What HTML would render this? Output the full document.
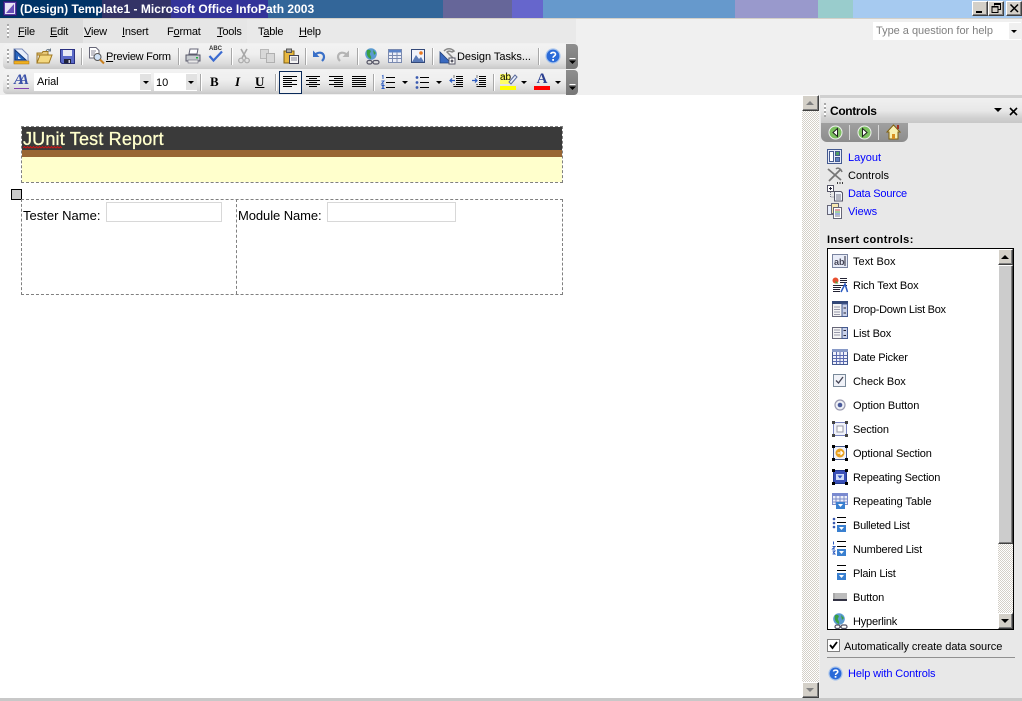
<!DOCTYPE html>
<html>
<head>
<meta charset="utf-8">
<style>
html,body{margin:0;padding:0;background:#fff}
body{width:1022px;height:701px;position:relative;overflow:hidden;font-family:"Liberation Sans",sans-serif;font-size:11px;color:#000}
.a{position:absolute}
.t{position:absolute;white-space:nowrap;line-height:14px;font-size:11px;margin-top:1px}
.m{letter-spacing:-.2px}
.t u{text-decoration:underline}
svg{position:absolute;overflow:visible}
.grip{position:absolute;width:2px;height:14px;background:repeating-linear-gradient(#a8a8a8 0 2px,#fff 2px 4px)}
.tb{position:absolute;background:linear-gradient(#f2f2f2 0,#efefef 40%,#dcdcdc 78%,#c8c8c8 100%);border-radius:4px 0 0 4px}
.sep{position:absolute;width:1px;height:17px;background:#a8a8a8;border-right:1px solid #fff}
.ov{position:absolute;left:566px;width:12px;background:linear-gradient(#8e8e8e,#777);border-radius:0 4px 4px 0}
.btn{position:absolute;box-sizing:border-box;background:#d4d0c8;border:1px solid;border-color:#fff #404040 #404040 #fff;box-shadow:inset -1px -1px 0 #808080}
.link{color:#0000ff}
.it{position:absolute;left:853px;white-space:nowrap;line-height:14px;font-size:11px;letter-spacing:-.12px;margin-top:1px}
.arr{position:absolute;width:0;height:0;border-left:3px solid transparent;border-right:3px solid transparent;border-top:3px solid #000}
</style>
</head>
<body>
<!-- title bar -->
<div class="a" style="left:0;top:0;width:102px;height:18px;background:#003366"></div>
<div class="a" style="left:102px;top:0;width:69px;height:18px;background:#333366"></div>
<div class="a" style="left:171px;top:0;width:97px;height:18px;background:#333399"></div>
<div class="a" style="left:268px;top:0;width:175px;height:18px;background:#336699"></div>
<div class="a" style="left:443px;top:0;width:69px;height:18px;background:#666699"></div>
<div class="a" style="left:512px;top:0;width:31px;height:18px;background:#6666cc"></div>
<div class="a" style="left:543px;top:0;width:192px;height:18px;background:#6699cc"></div>
<div class="a" style="left:735px;top:0;width:83px;height:18px;background:#9999cc"></div>
<div class="a" style="left:818px;top:0;width:35px;height:18px;background:#99cccc"></div>
<div class="a" style="left:853px;top:0;width:169px;height:18px;background:#a6caf0"></div>
<div class="a" style="left:0;top:18px;width:1022px;height:1px;background:#d4d0c8"></div>
<svg style="left:3px;top:1px" width="14" height="15"><rect x=".5" y=".5" width="13" height="14" fill="#5a3fa8" stroke="#2b1d70"/><rect x="2" y="2" width="10" height="11" fill="#e8e4f4"/><path d="M3 12 L11 3 V12Z" fill="#6a50b8"/></svg>
<div class="t" style="left:20px;top:1px;color:#fff;font-weight:bold;font-size:12px;letter-spacing:.02px">(Design) Template1 - Microsoft Office InfoPath 2003</div>
<div class="btn" style="left:972px;top:1px;width:16px;height:15px"><div class="a" style="left:3px;top:9px;width:6px;height:2px;background:#000"></div></div>
<div class="btn" style="left:988px;top:1px;width:16px;height:15px"><svg style="left:2px;top:1px" width="11" height="11"><path d="M3.5 2.5V.5H9.500V6.500H7.500M1 3.500H7V9.500H1Z M3 1.500H9.500 M1 4H7" fill="none" stroke="#000"/></svg></div>
<div class="btn" style="left:1006px;top:1px;width:16px;height:15px"><svg style="left:3px;top:2px" width="9" height="9"><path d="M.5 .5L8 8M8 .5L.5 8" stroke="#000" stroke-width="1.500"/></svg></div>

<!-- toolbar area -->
<div class="a" style="left:0;top:19px;width:1022px;height:76px;background:#f0f0f0"></div>
<div class="a" style="left:0;top:19px;width:83px;height:24px;background:#dcdcdc"></div>
<div class="a" style="left:83px;top:19px;width:164px;height:24px;background:#e6e6e6"></div>
<div class="a" style="left:247px;top:19px;width:329px;height:24px;background:#e9e9e9"></div>
<div class="grip" style="left:7px;top:24px"></div>
<div class="t m" style="left:18px;top:24px"><u>F</u>ile</div>
<div class="t m" style="left:50px;top:24px"><u>E</u>dit</div>
<div class="t m" style="left:84px;top:24px"><u>V</u>iew</div>
<div class="t m" style="left:122px;top:24px"><u>I</u>nsert</div>
<div class="t m" style="left:167px;top:24px">F<u>o</u>rmat</div>
<div class="t m" style="left:217px;top:24px"><u>T</u>ools</div>
<div class="t m" style="left:258px;top:24px">T<u>a</u>ble</div>
<div class="t m" style="left:299px;top:24px"><u>H</u>elp</div>
<div class="a" style="left:873px;top:22px;width:148px;height:18px;background:#fff"></div>
<div class="t" style="left:876px;top:23px;color:#808080;letter-spacing:-.02px">Type a question for help</div>
<div class="a" style="left:1009px;top:23px;width:12px;height:16px;background:#f0f0f0"></div>
<div class="arr" style="left:1011px;top:30px;border-left-width:3px"></div>

<!-- toolbar 1 -->
<div class="tb" style="left:3px;top:44px;width:564px;height:25px"></div>
<div class="ov" style="top:44px;height:25px"></div>
<div class="grip" style="left:7px;top:49px"></div>
<!-- design icon -->
<svg style="left:13px;top:48px" width="17" height="18"><path d="M1 1H9L15 7V15H1Z" fill="#e8eefa" stroke="#7a8ab8"/><path d="M2 2L13 12H2Z" fill="#2a66c0" stroke="#10367a"/><path d="M5 8L8 11H5Z" fill="#e8eefa"/><rect x="1" y="13" width="15" height="3" fill="#f0b020" stroke="#a87010" stroke-width=".5"/></svg>
<!-- open -->
<svg style="left:36px;top:48px" width="17" height="17"><path d="M1 5H6L7 3.500H12V7H1Z" fill="#e8c878" stroke="#a07820"/><path d="M1 15L4 7H16L13 15Z" fill="#f4d880" stroke="#a07820"/><path d="M1 5V15" stroke="#a07820"/><path d="M10 3C11 1 13 1 14.500 2.500M14.500 .5V3H12" fill="none" stroke="#6a7a8a"/></svg>
<!-- save -->
<svg style="left:60px;top:49px" width="15" height="15"><path d="M.5 .5H14.500V14.500H2L.5 13Z" fill="#5a6ac8" stroke="#2a3080"/><rect x="3" y="1" width="9" height="6" fill="#e6e9f4"/><rect x="4" y="10" width="7" height="4.500" fill="#20243c"/><rect x="8.500" y="11" width="1.500" height="3" fill="#ccd"/></svg>
<div class="sep" style="left:81px;top:48px"></div>
<svg style="left:88px;top:47px" width="17" height="18"><path d="M1.500 .5H8L11 3.500V11H1.500Z" fill="#fff" stroke="#667"/><path d="M3 4H8M3 6H7M3 8H6" stroke="#889"/><circle cx="9.500" cy="10" r="3.500" fill="#cfe0f4" stroke="#555"/><path d="M12 12.500L16 16.500" stroke="#c88020" stroke-width="2"/></svg>
<div class="t" style="left:106px;top:49px;letter-spacing:-.25px"><u>P</u>review Form</div>
<div class="sep" style="left:178px;top:48px"></div>
<svg style="left:185px;top:48px" width="16" height="16"><path d="M5 1H13L12 6H4Z" fill="#fff" stroke="#667"/><path d="M1 7H15V13H1Z" fill="#c8ccd0" stroke="#556"/><rect x="3" y="12" width="10" height="3" fill="#e8e8e8" stroke="#667" stroke-width=".6"/><rect x="11" y="9" width="2" height="1.500" fill="#20b040"/></svg>
<div class="a" style="left:209px;top:45px;font-size:6px;font-weight:bold;line-height:8px;color:#333;white-space:nowrap">ABC</div>
<svg style="left:208px;top:50px" width="16" height="13"><path d="M1.500 6L5.500 10.500L14 1.500" fill="none" stroke="#3a6ad0" stroke-width="2.200"/></svg>
<div class="sep" style="left:231px;top:48px"></div>
<svg style="left:238px;top:48px" width="12" height="16"><path d="M3 1L8 10M9 1L4 10" stroke="#a8a8a8" stroke-width="1.600"/><circle cx="3" cy="12.500" r="2.300" fill="none" stroke="#a8a8a8" stroke-width="1.200"/><circle cx="9" cy="12.500" r="2.300" fill="none" stroke="#a8a8a8" stroke-width="1.200"/></svg>
<svg style="left:260px;top:49px" width="16" height="14"><rect x=".5" y=".5" width="8" height="9" fill="#d8d8d8" stroke="#b8b8b8"/><rect x="6.500" y="4.500" width="8" height="9" fill="#d8d8d8" stroke="#b0b0b0"/></svg>
<svg style="left:283px;top:48px" width="16" height="16"><rect x="1" y="3" width="10" height="12" fill="#e8b840" stroke="#806010"/><rect x="3.500" y="1" width="5" height="3.500" fill="#a8a8a8" stroke="#555"/><rect x="6.500" y="7.500" width="9" height="8" fill="#f4f4f4" stroke="#445"/><path d="M8 10H14M8 12H14" stroke="#889"/></svg>
<div class="sep" style="left:305px;top:48px"></div>
<svg style="left:312px;top:49px" width="15" height="14"><path d="M2 7C6 2 12 3 12 8C12 10 11 11 10 12" fill="none" stroke="#3a70c8" stroke-width="2.200"/><path d="M1 1.500V8H7.500Z" fill="#3a70c8"/></svg>
<svg style="left:335px;top:49px" width="15" height="14"><path d="M13 7C9 2 3 3 3 8C3 10 4 11 5 12" fill="none" stroke="#b4b4b4" stroke-width="2.200"/><path d="M14 1.500V8H7.500Z" fill="#b4b4b4"/></svg>
<div class="sep" style="left:357px;top:48px"></div>
<svg style="left:364px;top:48px" width="17" height="17"><circle cx="7" cy="6" r="5.800" fill="#5a9ad0"/><path d="M3 2C6 1 8 3 6 5C5 7 8 8 7 11C4 10 2 7 3 2ZM9 2L12 5L10 7Z" fill="#3aa040"/><rect x="3" y="12.500" width="5" height="3.500" rx="1.700" fill="none" stroke="#556" stroke-width="1.200"/><rect x="9" y="12.500" width="6" height="3.500" rx="1.700" fill="none" stroke="#556" stroke-width="1.200"/></svg>
<svg style="left:388px;top:49px" width="14" height="14"><rect x=".5" y=".5" width="13" height="13" fill="#eef0f8" stroke="#7a8ab0"/><rect x="1" y="1" width="12" height="2.500" fill="#5a82c8"/><path d="M1 6.500H13M1 9.500H13M4.500 3V13M9 3V13" stroke="#7a8ab0"/></svg>
<svg style="left:411px;top:49px" width="14" height="14"><rect x=".5" y=".5" width="13" height="13" fill="#f0f2fa" stroke="#334878"/><path d="M1 13L5 6L8 10L10 8L13 13Z" fill="#5a7ab8"/><circle cx="10" cy="4" r="1.800" fill="#e87820"/></svg>
<div class="sep" style="left:432px;top:48px"></div>
<svg style="left:439px;top:47px" width="17" height="18"><path d="M1 16V5L12 16Z" fill="#3a6ac0" stroke="#20407a" stroke-width=".8"/><path d="M5 4C8 1 12 1 15 4L13 5C11 4 9 4 8 5L14 11" fill="none" stroke="#888" stroke-width="1.500"/><rect x="10" y="11" width="6" height="6" fill="#fff" stroke="#556"/><path d="M13 12.500V15.500M11.500 14H14.500" stroke="#223"/></svg>
<div class="t" style="left:457px;top:49px;letter-spacing:-.03px">Desi<u>g</u>n Tasks...</div>
<div class="sep" style="left:538px;top:48px"></div>
<svg style="left:545px;top:48px" width="16" height="16"><circle cx="8" cy="8" r="7" fill="#2a6ad8" stroke="#a8c4ec" stroke-width="1.200"/><path d="M5.800 6C6 4 10.500 3.800 10.500 6.200C10.500 8 8 8 8 9.800" fill="none" stroke="#fff" stroke-width="1.600"/><rect x="7.200" y="11" width="1.800" height="1.800" fill="#fff"/></svg>
<svg style="left:569px;top:58px" width="7" height="8"><path d="M.5 .5H6.500" stroke="#fff"/><path d="M0 2.500H7L3.500 6Z" fill="#000"/></svg>

<!-- toolbar 2 -->
<div class="tb" style="left:3px;top:70px;width:564px;height:24px"></div>
<div class="ov" style="top:70px;height:25px"></div>
<div class="grip" style="left:7px;top:75px"></div>
<div class="a" style="left:14px;top:72px;font-family:'Liberation Serif',serif;font-style:italic;font-weight:bold;font-size:15px;line-height:17px;color:#3a50a8;letter-spacing:-5px">AA</div>
<div class="a" style="left:14px;top:88px;width:15px;height:1px;background:#8040b0"></div>
<div class="a" style="left:34px;top:73px;width:117px;height:18px;background:#fff"></div>
<div class="t" style="left:37px;top:74px;letter-spacing:-.1px">Arial</div>
<div class="a" style="left:140px;top:74px;width:11px;height:16px;background:#e2e2e2"></div>
<div class="arr" style="left:143px;top:81px"></div>
<div class="a" style="left:154px;top:73px;width:43px;height:18px;background:#fff"></div>
<div class="t" style="left:156px;top:75px">10</div>
<div class="a" style="left:186px;top:74px;width:11px;height:16px;background:#e2e2e2"></div>
<div class="arr" style="left:188px;top:81px"></div>
<div class="sep" style="left:200px;top:74px"></div>
<div class="a" style="left:210px;top:74px;font-family:'Liberation Serif',serif;font-weight:bold;font-size:13px;line-height:15px">B</div>
<div class="a" style="left:235px;top:74px;font-family:'Liberation Serif',serif;font-weight:bold;font-style:italic;font-size:13px;line-height:15px">I</div>
<div class="a" style="left:255px;top:74px;font-family:'Liberation Serif',serif;font-weight:bold;font-size:13px;line-height:15px;text-decoration:underline">U</div>
<div class="sep" style="left:275px;top:74px"></div>
<div class="a" style="left:279px;top:71px;width:21px;height:21px;background:#f4f4f4;border:1px solid #0a2a5a"></div>
<svg style="left:283px;top:76px" width="15" height="12"><path d="M0 .5H14M0 2.500H9M0 4.500H14M0 6.500H9M0 8.500H14M0 10.500H9" stroke="#000"/></svg>
<svg style="left:306px;top:76px" width="15" height="12"><path d="M0 .5H14M3 2.500H11M0 4.500H14M3 6.500H11M0 8.500H14M3 10.500H11" stroke="#000"/></svg>
<svg style="left:329px;top:76px" width="15" height="12"><path d="M0 .5H14M5 2.500H14M0 4.500H14M5 6.500H14M0 8.500H14M5 10.500H14" stroke="#000"/></svg>
<svg style="left:352px;top:76px" width="15" height="12"><path d="M0 .5H14M0 2.500H14M0 4.500H14M0 6.500H14M0 8.500H14M0 10.500H14" stroke="#000"/></svg>
<div class="sep" style="left:373px;top:74px"></div>
<svg style="left:381px;top:75px" width="15" height="14"><path d="M5 2.500H14M5 7.500H14M5 12.500H14" stroke="#000"/><path d="M1 1L2 .5V4M.5 6H3L.5 9H3M.5 10.500H3L1.500 12L3 13.500H.5" fill="none" stroke="#2a5ac0" stroke-width=".9"/></svg>
<div class="arr" style="left:402px;top:81px"></div>
<svg style="left:415px;top:75px" width="15" height="14"><path d="M5 2.500H14M5 7.500H14M5 12.500H14" stroke="#000"/><circle cx="2" cy="2.500" r="1.400" fill="#3a5ab0"/><circle cx="2" cy="7.500" r="1.400" fill="#3a5ab0"/><circle cx="2" cy="12.500" r="1.400" fill="#3a5ab0"/></svg>
<div class="arr" style="left:436px;top:81px"></div>
<svg style="left:449px;top:75px" width="15" height="14"><path d="M7 1.500H14M7 3.500H14M7 5.500H14M7 7.500H14M7 9.500H14M5 11.500H14" stroke="#000"/><path d="M6 5.500H1M3 3.500L1 5.500L3 7.500" fill="none" stroke="#2a5ac0" stroke-width="1.200"/><path d="M5 .5V3M5 9V13" stroke="#000" stroke-dasharray="1 1"/></svg>
<svg style="left:472px;top:75px" width="15" height="14"><path d="M7 1.500H14M7 3.500H14M7 5.500H14M7 7.500H14M7 9.500H14M5 11.500H14" stroke="#000"/><path d="M0 5.500H5M3 3.500L5 5.500L3 7.500" fill="none" stroke="#2a5ac0" stroke-width="1.200"/><path d="M5 .5V3M5 9V13" stroke="#000" stroke-dasharray="1 1"/></svg>
<div class="sep" style="left:493px;top:74px"></div>
<div class="a" style="left:500px;top:74px;width:10px;height:10px;background:#ffff66"></div>
<div class="t" style="left:500px;top:70px;font-size:10px">ab</div>
<svg style="left:508px;top:74px" width="10" height="12"><path d="M1 8L7 1L9 3L3 10Z" fill="#e8eefc" stroke="#5a6a9a"/></svg>
<div class="a" style="left:500px;top:86px;width:16px;height:4px;background:#ffff00"></div>
<div class="arr" style="left:521px;top:81px"></div>
<div class="a" style="left:534px;top:72px;width:16px;text-align:center;font-family:'Liberation Serif',serif;font-weight:bold;font-size:15px;line-height:15px;color:#2a3f90">A</div>
<div class="a" style="left:534px;top:86px;width:16px;height:4px;background:#ff0000"></div>
<div class="arr" style="left:555px;top:81px"></div>
<svg style="left:569px;top:84px" width="7" height="8"><path d="M.5 .5H6.500" stroke="#fff"/><path d="M0 2.500H7L3.500 6Z" fill="#000"/></svg>

<!-- document -->
<div class="a" style="left:22px;top:127px;width:540px;height:23px;background:#3a3a3a"></div>
<div class="a" style="left:22px;top:150px;width:540px;height:7px;background:#996633"></div>
<div class="a" style="left:22px;top:157px;width:540px;height:25px;background:#ffffcc"></div>
<div class="a" style="left:21px;top:126px;width:540px;height:55px;border:1px dashed #808080"></div>
<div class="a" style="left:23px;top:129px;white-space:nowrap;font-size:18px;line-height:20px;color:#ffffcc;letter-spacing:.18px;-webkit-text-stroke:.3px #ffffcc">JUnit Test Report</div>
<svg style="left:23px;top:146px" width="41" height="3"><path d="M0 2L1.500 .5L3 2L4.500 .5L6 2L7.500 .5L9 2L10.500 .5L12 2L13.500 .5L15 2L16.500 .5L18 2L19.500 .5L21 2L22.500 .5L24 2L25.500 .5L27 2L28.500 .5L30 2L31.500 .5L33 2L34.500 .5L36 2L37.500 .5L39 2" fill="none" stroke="#e01010" stroke-width=".8"/></svg>
<div class="a" style="left:11px;top:189px;width:9px;height:9px;background:#c8c8c8;border:1px solid #000"></div>
<div class="a" style="left:21px;top:199px;width:540px;height:94px;border:1px dashed #808080"></div>
<div class="a" style="left:236px;top:199px;width:0;height:95px;border-left:1px dashed #808080"></div>
<div class="a" style="left:23px;top:208px;white-space:nowrap;font-size:13px;line-height:16px;letter-spacing:.02px">Tester Name:</div>
<div class="a" style="left:238px;top:208px;white-space:nowrap;font-size:13px;line-height:16px;letter-spacing:-.08px">Module Name:</div>
<div class="a" style="left:106px;top:202px;width:114px;height:18px;border:1px solid #d8d8d8"></div>
<div class="a" style="left:327px;top:202px;width:127px;height:18px;border:1px solid #d8d8d8"></div>

<!-- doc scrollbar -->
<div class="a" style="left:802px;top:95px;width:17px;height:603px;background:#e8e8e8;background-image:repeating-conic-gradient(#d4d0c8 0 25%,#fff 0 50%);background-size:2px 2px"></div>
<div class="btn" style="left:802px;top:95px;width:17px;height:16px"><div class="a" style="left:3px;top:5px;width:0;height:0;border-left:4px solid transparent;border-right:4px solid transparent;border-bottom:4px solid #808080"></div></div>
<div class="btn" style="left:802px;top:682px;width:17px;height:16px"><div class="a" style="left:3px;top:5px;width:0;height:0;border-left:4px solid transparent;border-right:4px solid transparent;border-top:4px solid #808080"></div></div>
<div class="a" style="left:0;top:698px;width:1022px;height:3px;background:#c8c8c8"></div>

<!-- task pane -->
<div class="a" style="left:819px;top:95px;width:3px;height:603px;background:#f0f0f0"></div>
<div class="a" style="left:820px;top:95px;width:202px;height:603px;background:#e8e8e8"></div>
<div class="a" style="left:820px;top:95px;width:202px;height:3px;background:#d0d0d0"></div>
<div class="a" style="left:821px;top:98px;width:201px;height:25px;background:linear-gradient(#f0f0f0 0,#e8e8e8 50%,#d0d0d0 80%,#c8c8c8 100%)"></div>
<div class="grip" style="left:824px;top:103px"></div>
<div class="t" style="left:830px;top:103px;font-weight:bold;font-size:12px;letter-spacing:-.35px">Controls</div>
<div class="a" style="left:994px;top:108px;width:0;height:0;border-left:4px solid transparent;border-right:4px solid transparent;border-top:4px solid #000"></div>
<svg style="left:1009px;top:107px" width="9" height="9"><path d="M1 1L8 8M8 1L1 8" stroke="#000" stroke-width="1.600"/></svg>
<div class="a" style="left:821px;top:123px;width:87px;height:19px;background:linear-gradient(#a0a0a0,#8c8c8c);border-radius:0 0 6px 6px"></div>
<svg style="left:828px;top:125px" width="15" height="15"><circle cx="7.500" cy="7.500" r="6.500" fill="#7cc060" stroke="#f0f0f0"/><path d="M9.500 3.500L5 7.500L9.500 11.500Z" fill="#fff" stroke="#222"/></svg>
<div class="a" style="left:849px;top:125px;width:1px;height:15px;background:#d8d8d8"></div>
<svg style="left:857px;top:125px" width="15" height="15"><circle cx="7.500" cy="7.500" r="6.500" fill="#7cc060" stroke="#f0f0f0"/><path d="M5.500 3.500L10 7.500L5.500 11.500Z" fill="#fff" stroke="#222"/></svg>
<div class="a" style="left:878px;top:125px;width:1px;height:15px;background:#d8d8d8"></div>
<svg style="left:886px;top:124px" width="15" height="16"><path d="M7.500 1L14 8H12V15H3V8H1Z" fill="#f8f0b0" stroke="#806010"/><rect x="6" y="10" width="3" height="5" fill="#d89020"/><rect x="11" y="1" width="2" height="4" fill="#a03020"/></svg>

<svg style="left:827px;top:149px" width="16" height="15"><rect x=".5" y=".5" width="14" height="14" fill="#e8ecf8" stroke="#445a90"/><rect x="2.500" y="2.500" width="4" height="10" fill="#fff" stroke="#445a90"/><rect x="8.500" y="2.500" width="4" height="4" fill="#50a060" stroke="#445a90"/><rect x="8.500" y="8.500" width="4" height="4" fill="#6080c0" stroke="#445a90"/></svg>
<div class="t link" style="left:848px;top:150px">Layout</div>
<svg style="left:827px;top:167px" width="17" height="17"><path d="M1 2L14 13M14 2L2 14" stroke="#777" stroke-width="1.800"/><path d="M9 2C11 0 14 2 15 5" fill="none" stroke="#777" stroke-width="1.500"/><path d="M10 16H11M12.500 16H13.500M15 16H16" stroke="#000" stroke-width="1.500"/></svg>
<div class="t" style="left:848px;top:168px">Controls</div>
<svg style="left:827px;top:185px" width="17" height="17"><rect x=".5" y=".5" width="6" height="6" fill="#fff" stroke="#556"/><path d="M2 3.500H5M3.500 2V5" stroke="#223"/><path d="M3.500 7V12H7" fill="none" stroke="#778" stroke-dasharray="1 1"/><path d="M7.500 6.500H14L15.500 8V16H7.500Z" fill="#f0f4fc" stroke="#556"/><path d="M9 10H14M9 12H14M9 14H14" stroke="#778"/></svg>
<div class="t link" style="left:848px;top:186px;letter-spacing:-.2px">Data Source</div>
<svg style="left:827px;top:203px" width="16" height="16"><rect x=".5" y="2.500" width="7" height="9" fill="#e8eefc" stroke="#667"/><rect x="4.500" y=".5" width="7" height="10" fill="#f8e8b0" stroke="#667"/><rect x="6.500" y="4.500" width="8" height="11" fill="#fff" stroke="#667"/><path d="M8 7H13" stroke="#c04040"/><path d="M8 9H13" stroke="#40a040"/><path d="M8 11H13" stroke="#4060c0"/><path d="M8 13H13" stroke="#778"/></svg>
<div class="t link" style="left:848px;top:204px">Views</div>

<div class="t" style="left:827px;top:232px;font-weight:bold;letter-spacing:.42px">Insert controls:</div>
<div class="a" style="left:827px;top:248px;width:185px;height:380px;background:#fff;border:1px solid #000;overflow:hidden"></div>
<div class="a" style="left:998px;top:249px;width:15px;height:380px;background:#e8e8e8;background-image:repeating-conic-gradient(#d4d0c8 0 25%,#fff 0 50%);background-size:2px 2px"></div>
<div class="btn" style="left:998px;top:249px;width:15px;height:16px"><div class="a" style="left:2px;top:5px;width:0;height:0;border-left:4px solid transparent;border-right:4px solid transparent;border-bottom:4px solid #000"></div></div>
<div class="btn" style="left:998px;top:265px;width:15px;height:279px;background:#cccccc"></div>
<div class="btn" style="left:998px;top:613px;width:15px;height:16px"><div class="a" style="left:2px;top:5px;width:0;height:0;border-left:4px solid transparent;border-right:4px solid transparent;border-top:4px solid #000"></div></div>

<div class="it" style="top:254px;letter-spacing:.05px">Text Box</div>
<svg style="left:832px;top:254px" width="16" height="14"><rect x=".5" y=".5" width="15" height="13" fill="#e8ecf8" stroke="#7a84a0"/><text x="2" y="11" font-family="Liberation Sans" font-size="9" font-weight="bold" fill="#445">ab</text><path d="M13 2V12" stroke="#223"/></svg>
<div class="it" style="top:278px">Rich Text Box</div>
<svg style="left:832px;top:277px" width="16" height="16"><circle cx="3.500" cy="3.500" r="3" fill="#e85030"/><path d="M3.500 3.500V6.500H6.500Z" fill="#50a040"/><path d="M8 1.500H15M8 3.500H15M8 5.500H15M1 8.500H15M1 10.500H9M1 12.500H8M1 14.500H8" stroke="#223"/><path d="M9 15L13 7L15.500 15" fill="none" stroke="#2a5ac0" stroke-width="1.500"/></svg>
<div class="it" style="top:302px;letter-spacing:-.28px">Drop-Down List Box</div>
<svg style="left:832px;top:301px" width="16" height="16"><rect x=".5" y=".5" width="15" height="15" fill="#f4f4f4" stroke="#667"/><rect x="0" y="0" width="16" height="3" fill="#334878"/><path d="M2 6H8M2 8.500H8M2 11H8M2 13.500H8" stroke="#99a"/><rect x="10" y="3" width="5.500" height="12.500" fill="#c8d0e8" stroke="#445a90"/><path d="M11.500 7H14M11.500 12H14" stroke="#223"/></svg>
<div class="it" style="top:326px">List Box</div>
<svg style="left:832px;top:327px" width="16" height="12"><rect x=".5" y=".5" width="15" height="11" fill="#f4f4f4" stroke="#667"/><path d="M2 3H8M2 5.500H8M2 8H8" stroke="#99a"/><rect x="10" y=".5" width="5.500" height="11" fill="#c8d0e8" stroke="#445a90"/><path d="M11.500 3.500H14M11.500 8.500H14" stroke="#223"/></svg>
<div class="it" style="top:350px;letter-spacing:-.2px">Date Picker</div>
<svg style="left:832px;top:349px" width="16" height="16"><rect x=".5" y="2.500" width="15" height="13" fill="#eef0fa" stroke="#445a90"/><rect x="0" y="0" width="16" height="3" fill="#889ac8"/><path d="M1 6.500H15M1 9.500H15M1 12.500H15M4.500 3V15M8 3V15M11.500 3V15" stroke="#5a6ab0"/></svg>
<div class="it" style="top:374px;letter-spacing:-.05px">Check Box</div>
<svg style="left:833px;top:374px" width="13" height="13"><rect x=".5" y=".5" width="12" height="12" fill="#f0f2f8" stroke="#7a8a9a"/><path d="M3 6.500L5.500 9L10 3" fill="none" stroke="#445" stroke-width="1.300"/></svg>
<div class="it" style="top:398px;letter-spacing:-.08px">Option Button</div>
<svg style="left:834px;top:399px" width="12" height="12"><circle cx="6" cy="6" r="5" fill="#eef0f6" stroke="#9a9ab0" stroke-width="1.200"/><circle cx="6" cy="6" r="2.300" fill="#4a5a9a"/></svg>
<div class="it" style="top:422px">Section</div>
<svg style="left:832px;top:421px" width="16" height="16"><rect x="1.500" y="1.500" width="13" height="13" fill="#f0f2fa" stroke="#7a84c0"/><rect x="5" y="5" width="6" height="6" fill="#fff" stroke="#99a"/><rect width="3" height="3" fill="#444"/><rect x="13" width="3" height="3" fill="#444"/><rect y="13" width="3" height="3" fill="#444"/><rect x="13" y="13" width="3" height="3" fill="#444"/></svg>
<div class="it" style="top:446px">Optional Section</div>
<svg style="left:832px;top:445px" width="16" height="16"><rect x="1.500" y="1.500" width="13" height="13" fill="#f0f2fa" stroke="#445a90"/><circle cx="8" cy="8" r="4.500" fill="#e8a020"/><path d="M5.500 8H10M8.500 6L10.500 8L8.500 10" fill="none" stroke="#fff" stroke-width="1.200"/><rect width="3" height="3"/><rect x="13" width="3" height="3"/><rect y="13" width="3" height="3"/><rect x="13" y="13" width="3" height="3"/></svg>
<div class="it" style="top:470px;letter-spacing:-.16px">Repeating Section</div>
<svg style="left:832px;top:469px" width="16" height="16"><rect x="1.500" y="1.500" width="13" height="13" fill="#3a50b8" stroke="#223a90"/><rect x="4" y="5" width="8" height="6" fill="#d0dcf8"/><path d="M5.500 6.500H10.500L8 9.500Z" fill="#2a50c0"/><rect width="3" height="3"/><rect x="13" width="3" height="3"/><rect y="13" width="3" height="3"/><rect x="13" y="13" width="3" height="3"/></svg>
<div class="it" style="top:494px;letter-spacing:-.05px">Repeating Table</div>
<svg style="left:832px;top:493px" width="16" height="16"><rect x=".5" y=".5" width="15" height="11" fill="#eef0fa" stroke="#7a8ac8"/><rect x="0" y="0" width="16" height="3" fill="#7a8ad0"/><path d="M1 6H15M1 9H15M4 3V12M8 3V12M12 3V12" stroke="#7a8ac8"/><rect x="4" y="9" width="9" height="7" fill="#3a80d0"/><path d="M6 11H11L8.500 14Z" fill="#fff"/></svg>
<div class="it" style="top:518px;letter-spacing:-.25px">Bulleted List</div>
<svg style="left:832px;top:517px" width="16" height="16"><circle cx="2" cy="2" r="1.300" fill="#3a5ab0"/><circle cx="2" cy="6" r="1.300" fill="#3a5ab0"/><circle cx="2" cy="10" r="1.300" fill="#3a5ab0"/><path d="M5 .5H14M5 5.500H14" stroke="#000"/><rect x="5" y="8" width="9" height="7" fill="#3a80d0"/><path d="M7 10H12L9.500 13Z" fill="#fff"/></svg>
<div class="it" style="top:542px;letter-spacing:-.2px">Numbered List</div>
<svg style="left:832px;top:541px" width="16" height="16"><path d="M1.500 .5V3.500M.5 5.500H3L.5 8H3M.5 10H3L1.500 11.500L3 13H.5" fill="none" stroke="#2a5ac0"/><path d="M5 .5H14M5 5.500H14" stroke="#000"/><rect x="5" y="8" width="9" height="7" fill="#3a80d0"/><path d="M7 10H12L9.500 13Z" fill="#fff"/></svg>
<div class="it" style="top:566px;letter-spacing:-.2px">Plain List</div>
<svg style="left:832px;top:565px" width="16" height="16"><path d="M5 .5H14M5 5.500H14" stroke="#000"/><rect x="5" y="8" width="9" height="7" fill="#3a80d0"/><path d="M7 10H12L9.500 13Z" fill="#fff"/></svg>
<div class="it" style="top:590px">Button</div>
<svg style="left:833px;top:593px" width="14" height="8"><rect width="14" height="8" fill="#a8a8a8"/><rect x="2" width="12" height="6" fill="#bcbcbc"/><rect y="6" width="14" height="2" fill="#334"/></svg>
<div class="it" style="top:614px;letter-spacing:-.2px">Hyperlink</div>
<svg style="left:832px;top:613px" width="17" height="16"><circle cx="7" cy="6" r="5.800" fill="#5a9ad0"/><path d="M3 2C6 1 8 3 6 5C5 7 8 8 7 11C4 10 2 7 3 2ZM9 2L12 5L10 7Z" fill="#3aa040"/><rect x="3" y="12" width="5" height="3.500" rx="1.700" fill="none" stroke="#556" stroke-width="1.200"/><rect x="9" y="12" width="6" height="3.500" rx="1.700" fill="none" stroke="#556" stroke-width="1.200"/></svg>

<div class="a" style="left:827px;top:639px;width:11px;height:11px;background:#fff;border:1px solid #808080"></div>
<svg style="left:829px;top:641px" width="9" height="9"><path d="M1 4L3.500 7L8 1" fill="none" stroke="#000" stroke-width="1.800"/></svg>
<div class="t" style="left:844px;top:639px;letter-spacing:-.04px">Automatically create data source</div>
<div class="a" style="left:827px;top:657px;width:188px;height:1px;background:#909090"></div>
<svg style="left:828px;top:666px" width="15" height="15"><circle cx="7.500" cy="7.500" r="6.500" fill="#2a6ad8" stroke="#a8c4ec" stroke-width="1.200"/><path d="M5.500 5.500C5.700 3.700 9.800 3.500 9.800 5.700C9.800 7.300 7.500 7.300 7.500 9" fill="none" stroke="#fff" stroke-width="1.500"/><rect x="6.700" y="10" width="1.700" height="1.700" fill="#fff"/></svg>
<div class="t link" style="left:848px;top:666px;letter-spacing:-.1px">Help with Controls</div>
</body>
</html>
